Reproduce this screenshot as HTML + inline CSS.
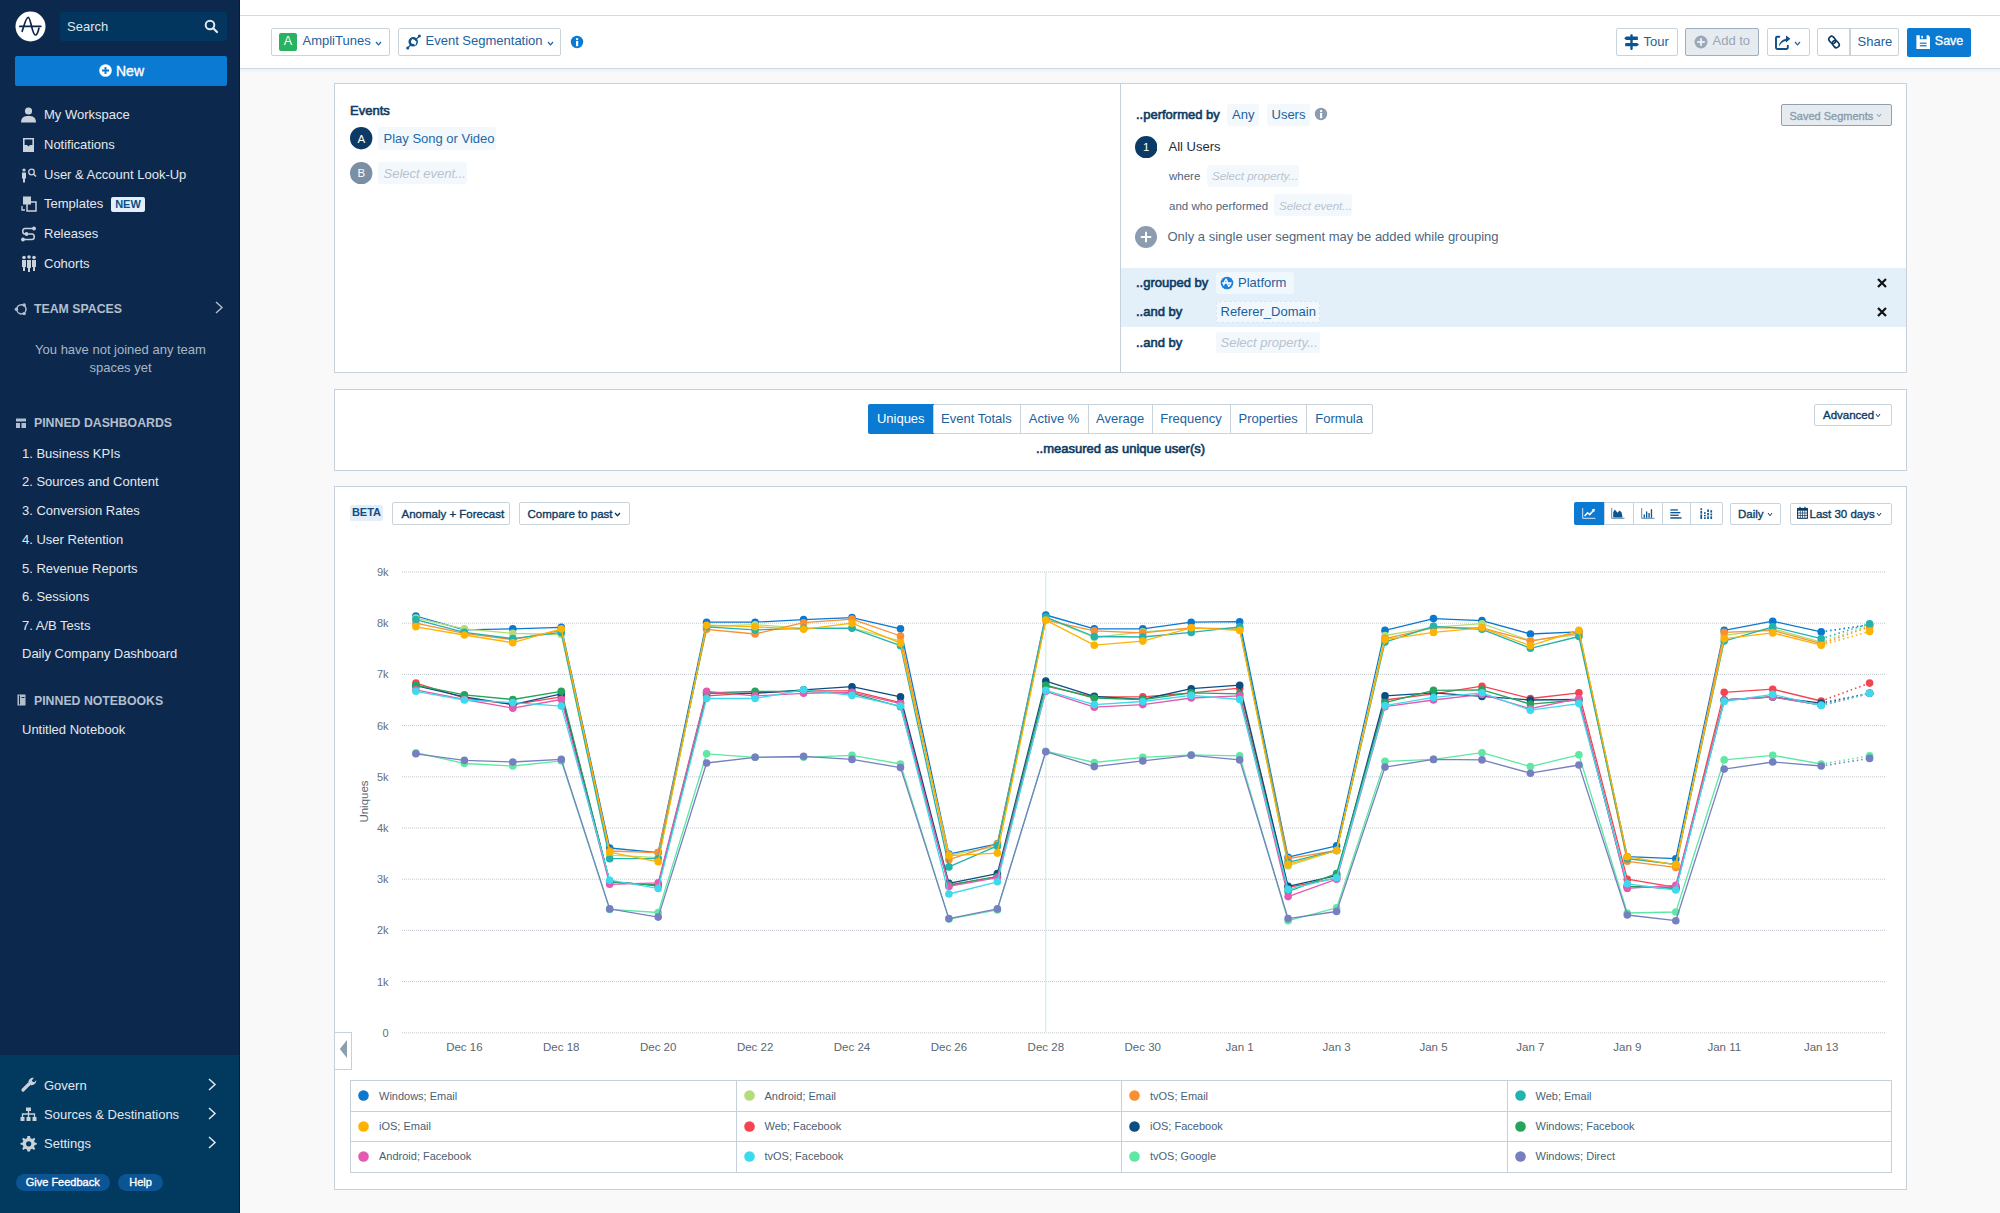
<!DOCTYPE html>
<html><head><meta charset="utf-8"><style>
html,body{margin:0;padding:0;}
body{width:2000px;height:1213px;position:relative;overflow:hidden;background:#f9f9f9;font-family:"Liberation Sans", sans-serif;}
.t{position:absolute;white-space:nowrap;}
.r{position:absolute;}
</style></head><body>
<div class="r" style="left:0px;top:0px;width:240px;height:1055px;background:#0c294d;"></div><div class="r" style="left:0px;top:1055px;width:240px;height:158px;background:#02395f;"></div><div class="r" style="left:239px;top:0px;width:1px;height:1213px;background:#081d38;"></div><svg class="r" style="left:15px;top:11px;" width="31" height="31" viewBox="0 0 31 31"><circle cx="15.5" cy="15.5" r="15" fill="#fff"/><path d="M4.8 15.4 H25.8 M7.2 20.3 C9.5 13 11 6.3 13.2 6.3 C15.8 6.3 17 24 20.4 24 C22.5 24 23.3 20 23.9 17.4" stroke="#0e2748" stroke-width="1.7" fill="none" stroke-linecap="round"/></svg><div class="r" style="left:60px;top:12px;width:167px;height:29px;background:#03365e;border-radius:3px;"></div><div class="t" style="left:67px;top:20.00px;font-size:13px;line-height:14.521px;color:#dfe5ec;font-weight:normal;">Search</div><svg class="r" style="left:204px;top:19px;" width="15" height="15" viewBox="0 0 15 15"><circle cx="6" cy="6" r="4.3" stroke="#e3e8ee" stroke-width="2" fill="none"/><path d="M9.2 9.2 L13 13" stroke="#e3e8ee" stroke-width="2.2" stroke-linecap="round"/></svg><div class="r" style="left:15px;top:56px;width:212px;height:30px;background:#0b7ad2;border-radius:2px;"></div><svg class="r" style="left:99px;top:64px;" width="13" height="13" viewBox="0 0 13 13"><circle cx="6.5" cy="6.5" r="6.3" fill="#fff"/><path d="M6.5 3 V10 M3 6.5 H10" stroke="#0b7ad2" stroke-width="2"/></svg><div class="t" style="left:116px;top:64.00px;font-size:14px;line-height:15.638px;color:#ffffff;font-weight:normal;-webkit-text-stroke:0.35px #ffffff;">New</div><div class="t" style="left:44px;top:108.00px;font-size:13px;line-height:14.521px;color:#e3e8ee;font-weight:normal;">My Workspace</div><div class="t" style="left:44px;top:138.00px;font-size:13px;line-height:14.521px;color:#e3e8ee;font-weight:normal;">Notifications</div><div class="t" style="left:44px;top:168.00px;font-size:13px;line-height:14.521px;color:#e3e8ee;font-weight:normal;">User &amp; Account Look-Up</div><div class="t" style="left:44px;top:197.00px;font-size:13px;line-height:14.521px;color:#e3e8ee;font-weight:normal;">Templates</div><div class="t" style="left:44px;top:227.00px;font-size:13px;line-height:14.521px;color:#e3e8ee;font-weight:normal;">Releases</div><div class="t" style="left:44px;top:257.00px;font-size:13px;line-height:14.521px;color:#e3e8ee;font-weight:normal;">Cohorts</div><svg class="r" style="left:20px;top:106px;" width="17" height="17" viewBox="0 0 17 17"><circle cx="8.5" cy="5" r="3.6" fill="#c9d1db"/><path d="M1 16.5 C1 11 4.5 10 8.5 10 C12.5 10 16 11 16 16.5 Z" fill="#c9d1db"/></svg><svg class="r" style="left:22px;top:137px;" width="13" height="16" viewBox="0 0 13 16"><path d="M1 1 H12 V15 H1 Z" fill="#c9d1db"/><path d="M2.6 2.6 H10.4 V8 H8 L6.5 9.6 L5 8 H2.6 Z" fill="#0c294d"/></svg><svg class="r" style="left:21px;top:167px;" width="17" height="16" viewBox="0 0 17 16"><circle cx="3" cy="3" r="1.6" fill="#c9d1db"/><rect x="1" y="5.5" width="4" height="6" fill="#c9d1db"/><rect x="2" y="11" width="2" height="4.5" fill="#c9d1db"/><circle cx="10.5" cy="5" r="2.8" stroke="#c9d1db" stroke-width="1.3" fill="none"/><path d="M12.5 7 L15 9.5" stroke="#c9d1db" stroke-width="1.4"/></svg><svg class="r" style="left:21px;top:196px;" width="16" height="16" viewBox="0 0 16 16"><rect x="2" y="0.5" width="8" height="8" fill="#c9d1db"/><rect x="6" y="6" width="9" height="9" stroke="#c9d1db" stroke-width="1.5" fill="none"/><path d="M1 10 V14 H4" stroke="#c9d1db" stroke-width="1.3" fill="none"/></svg><svg class="r" style="left:20px;top:226px;" width="17" height="16" viewBox="0 0 17 16"><path d="M14 2.5 H5 C2 2.5 2 8 5 8 H12 C15 8 15 13.5 12 13.5 H3" stroke="#c9d1db" stroke-width="1.5" fill="none"/><circle cx="14" cy="2.5" r="1.9" fill="#c9d1db"/><circle cx="6.5" cy="8" r="1.9" fill="#c9d1db"/><circle cx="3" cy="13.5" r="1.9" fill="#c9d1db"/></svg><svg class="r" style="left:21px;top:255px;" width="16" height="17" viewBox="0 0 16 17"><circle cx="3" cy="2.5" r="1.8" fill="#c9d1db"/><circle cx="8" cy="2" r="1.8" fill="#c9d1db"/><circle cx="13" cy="2.5" r="1.8" fill="#c9d1db"/><rect x="1" y="5" width="4" height="7" fill="#c9d1db"/><rect x="6" y="5" width="4" height="8" fill="#c9d1db"/><rect x="11" y="5" width="4" height="7" fill="#c9d1db"/><rect x="2" y="11" width="2" height="5" fill="#c9d1db"/><rect x="7" y="12" width="2" height="5" fill="#c9d1db"/><rect x="12" y="11" width="2" height="5" fill="#c9d1db"/></svg><div class="r" style="left:111px;top:197px;width:34px;height:15px;background:#e4eef8;border-radius:2px;"></div><div class="t" style="left:-372px;width:1000px;text-align:center;top:198.00px;font-size:11px;line-height:12.287px;color:#0d4f86;font-weight:bold;">NEW</div><div class="t" style="left:34px;top:303.00px;font-size:12.3px;line-height:13.739px;color:#b3bfcd;font-weight:bold;">TEAM SPACES</div><svg class="r" style="left:14px;top:302px;" width="14" height="15" viewBox="0 0 14 15"><circle cx="7.4" cy="7.3" r="4.6" stroke="#b3bfcd" stroke-width="1.5" fill="none"/><circle cx="2.4" cy="7.3" r="1.7" fill="#b3bfcd"/><circle cx="10.2" cy="3" r="1.7" fill="#b3bfcd"/><circle cx="10.2" cy="11.6" r="1.7" fill="#b3bfcd"/></svg><svg class="r" style="left:213px;top:300px;" width="12" height="15" viewBox="0 0 12 15"><path d="M3 2 L9 7.5 L3 13" stroke="#b3bfcd" stroke-width="1.4" fill="none"/></svg><div class="t" style="left:-379.5px;width:1000px;text-align:center;top:343.00px;font-size:13px;line-height:14.521px;color:#aab6c4;font-weight:normal;">You have not joined any team</div><div class="t" style="left:-379.5px;width:1000px;text-align:center;top:361.00px;font-size:13px;line-height:14.521px;color:#aab6c4;font-weight:normal;">spaces yet</div><div class="t" style="left:34px;top:417.00px;font-size:12.3px;line-height:13.739px;color:#b3bfcd;font-weight:bold;">PINNED DASHBOARDS</div><svg class="r" style="left:16px;top:418px;" width="11" height="11" viewBox="0 0 11 11"><rect x="0" y="0.5" width="10" height="3" fill="#b3bfcd"/><rect x="0" y="5" width="4" height="5" fill="#b3bfcd"/><rect x="5.5" y="5" width="4.5" height="5" fill="#b3bfcd"/></svg><div class="t" style="left:22px;top:447.00px;font-size:13px;line-height:14.521px;color:#e3e8ee;font-weight:normal;">1. Business KPIs</div><div class="t" style="left:22px;top:475.00px;font-size:13px;line-height:14.521px;color:#e3e8ee;font-weight:normal;">2. Sources and Content</div><div class="t" style="left:22px;top:504.00px;font-size:13px;line-height:14.521px;color:#e3e8ee;font-weight:normal;">3. Conversion Rates</div><div class="t" style="left:22px;top:533.00px;font-size:13px;line-height:14.521px;color:#e3e8ee;font-weight:normal;">4. User Retention</div><div class="t" style="left:22px;top:562.00px;font-size:13px;line-height:14.521px;color:#e3e8ee;font-weight:normal;">5. Revenue Reports</div><div class="t" style="left:22px;top:590.00px;font-size:13px;line-height:14.521px;color:#e3e8ee;font-weight:normal;">6. Sessions</div><div class="t" style="left:22px;top:619.00px;font-size:13px;line-height:14.521px;color:#e3e8ee;font-weight:normal;">7. A/B Tests</div><div class="t" style="left:22px;top:647.00px;font-size:13px;line-height:14.521px;color:#e3e8ee;font-weight:normal;">Daily Company Dashboard</div><div class="t" style="left:34px;top:695.00px;font-size:12.3px;line-height:13.739px;color:#b3bfcd;font-weight:bold;">PINNED NOTEBOOKS</div><svg class="r" style="left:17px;top:694px;" width="9" height="12" viewBox="0 0 9 12"><rect x="0.5" y="0.5" width="8" height="11" fill="#b3bfcd"/><rect x="2" y="1.5" width="1" height="9" fill="#0c294d"/><rect x="4.5" y="3" width="3" height="1" fill="#0c294d"/></svg><div class="t" style="left:22px;top:723.00px;font-size:13px;line-height:14.521px;color:#e3e8ee;font-weight:normal;">Untitled Notebook</div><div class="t" style="left:44px;top:1079.00px;font-size:13px;line-height:14.521px;color:#e3e8ee;font-weight:normal;">Govern</div><svg class="r" style="left:206px;top:1076.9px;" width="12" height="15" viewBox="0 0 12 15"><path d="M3 2 L9 7.5 L3 13" stroke="#e3e8ee" stroke-width="1.5" fill="none"/></svg><div class="t" style="left:44px;top:1108.00px;font-size:13px;line-height:14.521px;color:#e3e8ee;font-weight:normal;">Sources &amp; Destinations</div><svg class="r" style="left:206px;top:1105.7px;" width="12" height="15" viewBox="0 0 12 15"><path d="M3 2 L9 7.5 L3 13" stroke="#e3e8ee" stroke-width="1.5" fill="none"/></svg><div class="t" style="left:44px;top:1137.00px;font-size:13px;line-height:14.521px;color:#e3e8ee;font-weight:normal;">Settings</div><svg class="r" style="left:206px;top:1135.4px;" width="12" height="15" viewBox="0 0 12 15"><path d="M3 2 L9 7.5 L3 13" stroke="#e3e8ee" stroke-width="1.5" fill="none"/></svg><svg class="r" style="left:20px;top:1076px;" width="17" height="17" viewBox="0 0 17 17"><path d="M3 14 L9 8" stroke="#c9d1db" stroke-width="3.2" stroke-linecap="round"/><path d="M8.5 7 A4.5 4.5 0 0 1 14 1.8 L11.8 4.4 L12.6 5.8 L14.6 6.2 L16.2 4 A4.5 4.5 0 0 1 10.5 9 Z" fill="#c9d1db"/></svg><svg class="r" style="left:20px;top:1107px;" width="17" height="15" viewBox="0 0 17 15"><rect x="6" y="0.5" width="5" height="3.5" fill="#c9d1db"/><path d="M8.5 4 V7 M2.5 10 V7 H14.5 V10 M8.5 7 V10" stroke="#c9d1db" stroke-width="1.3" fill="none"/><rect x="0.5" y="10" width="4" height="4" fill="#c9d1db"/><rect x="6.5" y="10" width="4" height="4" fill="#c9d1db"/><rect x="12.5" y="10" width="4" height="4" fill="#c9d1db"/></svg><svg class="r" style="left:20px;top:1135px;" width="17" height="17" viewBox="0 0 17 17"><path d="M8.5 1 L10 1 L10.5 3.2 L12.3 4 L14.2 2.8 L15.3 4 L14 5.9 L14.8 7.6 L16.8 8 L16.8 9.6 L14.8 10 L14 11.8 L15.2 13.8 L14 14.9 L12.2 13.7 L10.4 14.5 L10 16.6 L7.4 16.6 L7 14.5 L5.2 13.7 L3.3 14.9 L2.2 13.8 L3.4 11.8 L2.6 10 L0.5 9.6 L0.5 8 L2.6 7.6 L3.4 5.9 L2.2 4 L3.3 2.8 L5.2 4 L7 3.2 L7.4 1 Z" fill="#c9d1db"/><circle cx="8.7" cy="8.8" r="2.6" fill="#02395f"/></svg><div class="r" style="left:16px;top:1174px;width:94px;height:17px;background:#0b5594;border-radius:9px;"></div><div class="t" style="left:-437.3px;width:1000px;text-align:center;top:1176.00px;font-size:11px;line-height:12.287px;color:#ffffff;font-weight:normal;-webkit-text-stroke:0.35px #ffffff;">Give Feedback</div><div class="r" style="left:118px;top:1174px;width:45px;height:17px;background:#0b5594;border-radius:9px;"></div><div class="t" style="left:-359.5px;width:1000px;text-align:center;top:1176.00px;font-size:11px;line-height:12.287px;color:#ffffff;font-weight:normal;-webkit-text-stroke:0.35px #ffffff;">Help</div><div class="r" style="left:240px;top:0px;width:1760px;height:15px;background:#fff;"></div><div class="r" style="left:240px;top:15px;width:1760px;height:1px;background:#d3dbe3;"></div><div class="r" style="left:240px;top:16px;width:1760px;height:52px;background:#fff;"></div><div class="r" style="left:240px;top:68px;width:1760px;height:1px;background:#cfd8e0;"></div><div class="r" style="left:240px;top:69px;width:1760px;height:4px;background:linear-gradient(#eef1f4,#f8f9fa);"></div><div class="r" style="left:271px;top:28px;width:119px;height:28px;background:#fff;border:1.5px solid #c9d3dc;border-radius:2px;box-sizing:border-box;"></div><div class="r" style="left:279px;top:33px;width:18px;height:18px;background:#27b35f;border-radius:2px;"></div><div class="t" style="left:-212px;width:1000px;text-align:center;top:35.00px;font-size:12.5px;line-height:13.963px;color:#fff;font-weight:normal;">A</div><div class="t" style="left:302.5px;top:34.00px;font-size:13px;line-height:14.521px;color:#1b619e;font-weight:normal;">AmpliTunes</div><svg class="r" style="left:375px;top:40.5px;" width="7" height="5" viewBox="0 0 7 5"><path d="M1 1 L3.5 3.8 L6 1" stroke="#1b619e" stroke-width="1.2" fill="none"/></svg><div class="r" style="left:398px;top:28px;width:163px;height:28px;background:#fff;border:1.5px solid #c9d3dc;border-radius:2px;box-sizing:border-box;"></div><svg class="r" style="left:405px;top:34px;" width="16" height="16" viewBox="0 0 16 16"><path d="M2.7 14 L14.4 2" stroke="#0c5390" stroke-width="1.1"/><circle cx="2.7" cy="14" r="1.5" fill="#0c5390"/><circle cx="14.4" cy="2" r="1.5" fill="#0c5390"/><circle cx="8.2" cy="7.8" r="3.5" stroke="#0c5390" stroke-width="2.5" fill="#fff"/><path d="M6.6 4.5 L11.6 7.7 L10.1 12 Z" fill="#fff"/></svg><div class="t" style="left:425.5px;top:34.00px;font-size:13px;line-height:14.521px;color:#1b619e;font-weight:normal;">Event Segmentation</div><svg class="r" style="left:547px;top:40.5px;" width="7" height="5" viewBox="0 0 7 5"><path d="M1 1 L3.5 3.8 L6 1" stroke="#1b619e" stroke-width="1.2" fill="none"/></svg><svg class="r" style="left:570px;top:35px;" width="14" height="14" viewBox="0 0 14 14"><circle cx="7" cy="7" r="6.2" fill="#0b7ad2"/><rect x="6" y="6" width="2.2" height="5.2" fill="#fff"/><circle cx="7.1" cy="4.1" r="1.2" fill="#fff"/></svg><div class="r" style="left:1616px;top:28px;width:62px;height:28px;background:#fff;border:1.5px solid #c9d3dc;border-radius:2px;box-sizing:border-box;"></div><svg class="r" style="left:1623px;top:33px;" width="17" height="18" viewBox="0 0 17 18"><rect x="7.3" y="1.3" width="2.4" height="15.6" rx="0.8" fill="#0d5591"/><path d="M1.2 5.2 L3.1 3.4 H14.3 Q14.9 3.4 14.9 4 V6.4 Q14.9 7 14.3 7 H3.1 Z" fill="#0d5591"/><path d="M2.8 9.9 H14.1 L16 11.6 L14.1 13.3 H2.8 Q2.2 13.3 2.2 12.7 V10.5 Q2.2 9.9 2.8 9.9 Z" fill="#0d5591"/></svg><div class="t" style="left:1643.5px;top:35.00px;font-size:13px;line-height:14.521px;color:#1b619e;font-weight:normal;">Tour</div><div class="r" style="left:1685px;top:28px;width:74px;height:28px;background:#e6ebf0;border:1.5px solid #9fafbf;border-radius:2px;box-sizing:border-box;"></div><svg class="r" style="left:1694px;top:35px;" width="14" height="14" viewBox="0 0 14 14"><circle cx="7" cy="7" r="6.5" fill="#9aa9b9"/><path d="M7 3.2 V10.8 M3.2 7 H10.8" stroke="#e6ebf0" stroke-width="2"/></svg><div class="t" style="left:1712.5px;top:34.00px;font-size:13px;line-height:14.521px;color:#98a6b6;font-weight:normal;">Add to</div><div class="r" style="left:1767px;top:28px;width:43px;height:28px;background:#fff;border:1.5px solid #c9d3dc;border-radius:2px;box-sizing:border-box;"></div><svg class="r" style="left:1774px;top:34px;" width="18" height="17" viewBox="0 0 18 17"><path d="M5.3 2.8 H3.2 Q2 2.8 2 4 V13.8 Q2 15 3.2 15 H12.6 Q13.8 15 13.8 13.8 V11.8" stroke="#0d4f86" stroke-width="1.9" fill="none" stroke-linecap="round"/><path d="M4.8 12.5 C5.3 8.5 8 5.6 12 4.8 V1.5 L16.4 4.8 L12 8.6 V6.9 C9 7.2 6.6 9.2 4.8 12.5 Z" fill="#0d4f86"/></svg><svg class="r" style="left:1793.5px;top:40.5px;" width="7" height="5" viewBox="0 0 7 5"><path d="M1 1 L3.5 3.8 L6 1" stroke="#1b619e" stroke-width="1.2" fill="none"/></svg><div class="r" style="left:1817px;top:28px;width:82px;height:28px;background:#fff;border:1.5px solid #c9d3dc;border-radius:2px;box-sizing:border-box;"></div><div class="r" style="left:1849px;top:29px;width:1.5px;height:26px;background:#c9d3dc;"></div><svg class="r" style="left:1824.5px;top:32.5px;" width="18" height="18" viewBox="0 0 18 18"><g transform="rotate(-40 9 9)" stroke="#0d3b63" stroke-width="1.6" fill="none"><rect x="6.2" y="2.5" width="5.6" height="7.6" rx="2.8"/><rect x="6.2" y="7.9" width="5.6" height="7.6" rx="2.8"/></g></svg><div class="t" style="left:1857.5px;top:35.00px;font-size:13px;line-height:14.521px;color:#1b619e;font-weight:normal;">Share</div><div class="r" style="left:1907px;top:27.5px;width:64px;height:29.0px;background:#0b7ad2;border-radius:2px;"></div><svg class="r" style="left:1916px;top:35px;" width="15" height="14" viewBox="0 0 15 14"><path d="M0.4 0.3 H12.4 L14 1.9 V13.9 H0.4 Z" fill="#fff"/><rect x="3.8" y="0" width="6.8" height="4.2" fill="#0b7ad2"/><rect x="5.3" y="0.9" width="1.6" height="2.4" fill="#fff"/><rect x="3.8" y="7.6" width="6.8" height="1.2" fill="#0b7ad2"/><rect x="3.8" y="10.1" width="6.8" height="1.3" fill="#0b7ad2"/></svg><div class="t" style="left:1934.8px;top:35.00px;font-size:12.5px;line-height:13.963px;color:#fff;font-weight:normal;-webkit-text-stroke:0.35px #fff;">Save</div><div class="r" style="left:334px;top:83px;width:1573px;height:290px;background:#fff;border:1.3px solid #c7d1db;box-sizing:border-box;"></div><div class="r" style="left:1120px;top:84px;width:1.2999999999999545px;height:288px;background:#c7d1db;"></div><div class="r" style="left:1121.3px;top:267.5px;width:784.4000000000001px;height:59.5px;background:#e3eff9;"></div><div class="t" style="left:350px;top:104.00px;font-size:13px;line-height:14.521px;color:#0d3b63;font-weight:normal;-webkit-text-stroke:0.6px #0d3b63;">Events</div><svg class="r" style="left:350.2px;top:127.2px;" width="22.4" height="22.4" viewBox="0 0 22.4 22.4"><circle cx="11.2" cy="11.2" r="11.2" fill="#0b3a66"/></svg><div class="t" style="left:-138.60000000000002px;width:1000px;text-align:center;top:133.00px;font-size:11.5px;line-height:12.845px;color:#fff;font-weight:normal;">A</div><div class="r" style="left:378px;top:127.4px;width:118px;height:22.19999999999999px;background:#f3f8fd;border-radius:3px;"></div><div class="t" style="left:383.5px;top:132.00px;font-size:13px;line-height:14.521px;color:#1a69ab;font-weight:normal;">Play Song or Video</div><svg class="r" style="left:350.2px;top:161.8px;" width="22.4" height="22.4" viewBox="0 0 22.4 22.4"><circle cx="11.2" cy="11.2" r="11.2" fill="#7b8ea3"/></svg><div class="t" style="left:-138.60000000000002px;width:1000px;text-align:center;top:167.00px;font-size:11.5px;line-height:12.845px;color:#fff;font-weight:normal;">B</div><div class="r" style="left:378px;top:162px;width:88.5px;height:22px;background:#f3f8fd;border-radius:3px;"></div><div class="t" style="left:383.5px;top:167.00px;font-size:13px;line-height:14.521px;color:#b8c3ce;font-weight:normal;font-style:italic;">Select event...</div><div class="t" style="left:1136px;top:108.00px;font-size:13px;line-height:14.521px;color:#0d3b63;font-weight:normal;-webkit-text-stroke:0.6px #0d3b63;">..performed by</div><div class="r" style="left:1227px;top:104px;width:32px;height:22px;background:#f3f8fd;border-radius:3px;"></div><div class="t" style="left:1232px;top:108.00px;font-size:13px;line-height:14.521px;color:#1b619e;font-weight:normal;">Any</div><div class="r" style="left:1267px;top:104px;width:43px;height:22px;background:#f3f8fd;border-radius:3px;"></div><div class="t" style="left:1271.5px;top:108.00px;font-size:13px;line-height:14.521px;color:#1b619e;font-weight:normal;">Users</div><svg class="r" style="left:1314px;top:107px;" width="14" height="14" viewBox="0 0 14 14"><circle cx="7" cy="7" r="6.2" fill="#8c9db0"/><rect x="6" y="6" width="2.2" height="5.2" fill="#fff"/><circle cx="7.1" cy="4.1" r="1.2" fill="#fff"/></svg><div class="r" style="left:1781px;top:104px;width:111px;height:22px;background:#e6ebf0;border:1.3px solid #8fa0b2;border-radius:2px;box-sizing:border-box;"></div><div class="t" style="left:1789.5px;top:110.00px;font-size:11px;line-height:12.287px;color:#8a9bae;font-weight:normal;-webkit-text-stroke:0.35px #8a9bae;">Saved Segments</div><svg class="r" style="left:1876px;top:112.5px;" width="6" height="5" viewBox="0 0 6 5"><path d="M1 1 L3.0 3.8 L5 1" stroke="#8a9bae" stroke-width="1" fill="none"/></svg><svg class="r" style="left:1135.1px;top:135.60000000000002px;" width="22.4" height="22.4" viewBox="0 0 22.4 22.4"><circle cx="11.2" cy="11.2" r="11.2" fill="#0b3a66"/></svg><div class="t" style="left:646.3px;width:1000px;text-align:center;top:141.00px;font-size:11.5px;line-height:12.845px;color:#fff;font-weight:normal;">1</div><div class="t" style="left:1168.5px;top:140.00px;font-size:13px;line-height:14.521px;color:#1d2b3a;font-weight:normal;">All Users</div><div class="t" style="left:1169px;top:170.00px;font-size:11.5px;line-height:12.845px;color:#4d6681;font-weight:normal;">where</div><div class="r" style="left:1207px;top:165px;width:92px;height:22px;background:#f3f8fd;border-radius:3px;"></div><div class="t" style="left:1212px;top:170.00px;font-size:11.5px;line-height:12.845px;color:#b8c3ce;font-weight:normal;font-style:italic;">Select property...</div><div class="t" style="left:1169px;top:200.00px;font-size:11.5px;line-height:12.845px;color:#4d6681;font-weight:normal;">and who performed</div><div class="r" style="left:1274px;top:194px;width:77.5px;height:22px;background:#f3f8fd;border-radius:3px;"></div><div class="t" style="left:1279px;top:200.00px;font-size:11.5px;line-height:12.845px;color:#b8c3ce;font-weight:normal;font-style:italic;">Select event...</div><svg class="r" style="left:1135px;top:226px;" width="22" height="22" viewBox="0 0 22 22"><circle cx="11" cy="11" r="11" fill="#8c9db0"/><path d="M11 5.8 V16.2 M5.8 11 H16.2" stroke="#fff" stroke-width="2"/></svg><div class="t" style="left:1167.5px;top:230.00px;font-size:13px;line-height:14.521px;color:#4f6882;font-weight:normal;">Only a single user segment may be added while grouping</div><div class="t" style="left:1136px;top:276.00px;font-size:13px;line-height:14.521px;color:#0d3b63;font-weight:normal;-webkit-text-stroke:0.6px #0d3b63;">..grouped by</div><div class="r" style="left:1216px;top:272px;width:78px;height:21.5px;background:#f0f7fd;border-radius:3px;"></div><svg class="r" style="left:1219.5px;top:275.5px;" width="14" height="14" viewBox="0 0 14 14"><circle cx="7" cy="7" r="6.3" fill="#1b7fdc"/><g transform="translate(7,7) scale(0.4) translate(-15.5,-15.5)"><path d="M4.8 15.4 H25.8 M7.2 20.3 C9.5 13 11 6.3 13.2 6.3 C15.8 6.3 17 24 20.4 24 C22.5 24 23.3 20 23.9 17.4" stroke="#fff" stroke-width="3.6" fill="none" stroke-linecap="round"/></g></svg><div class="t" style="left:1238px;top:276.00px;font-size:13px;line-height:14.521px;color:#1b619e;font-weight:normal;">Platform</div><svg class="r" style="left:1876px;top:277px;" width="12" height="12" viewBox="0 0 12 12"><path d="M2 2 L10 10 M10 2 L2 10" stroke="#111" stroke-width="2.2"/></svg><div class="t" style="left:1136px;top:305.00px;font-size:13px;line-height:14.521px;color:#0d3b63;font-weight:normal;-webkit-text-stroke:0.6px #0d3b63;">..and by</div><div class="r" style="left:1216px;top:301px;width:104px;height:21.5px;background:#f0f7fd;border-radius:3px;border:1px dashed #d8e6f2;box-sizing:border-box;"></div><div class="t" style="left:1220.5px;top:305.00px;font-size:13px;line-height:14.521px;color:#1b619e;font-weight:normal;">Referer_Domain</div><svg class="r" style="left:1876px;top:306px;" width="12" height="12" viewBox="0 0 12 12"><path d="M2 2 L10 10 M10 2 L2 10" stroke="#111" stroke-width="2.2"/></svg><div class="t" style="left:1136px;top:336.00px;font-size:13px;line-height:14.521px;color:#0d3b63;font-weight:normal;-webkit-text-stroke:0.6px #0d3b63;">..and by</div><div class="r" style="left:1216px;top:331.5px;width:104px;height:21.5px;background:#f3f8fd;border-radius:3px;"></div><div class="t" style="left:1220.5px;top:336.00px;font-size:13px;line-height:14.521px;color:#b8c3ce;font-weight:normal;font-style:italic;">Select property...</div><div class="r" style="left:334px;top:389px;width:1573px;height:82px;background:#fff;border:1.3px solid #c7d1db;box-sizing:border-box;"></div><div class="r" style="left:868px;top:404px;width:504.5px;height:30px;background:#fff;border:1.2px solid #c9d3dc;border-radius:2px;box-sizing:border-box;"></div><div class="r" style="left:868px;top:404px;width:65.60000000000002px;height:30px;background:#0b7ad2;border-radius:2px 0 0 2px;"></div><div class="t" style="left:400.75px;width:1000px;text-align:center;top:412.00px;font-size:13px;line-height:14.521px;color:#fff;font-weight:normal;">Uniques</div><div class="r" style="left:933px;top:405px;width:1.2000000000000455px;height:28px;background:#c9d3dc;"></div><div class="t" style="left:476.4px;width:1000px;text-align:center;top:412.00px;font-size:13px;line-height:14.521px;color:#1b619e;font-weight:normal;">Event Totals</div><div class="r" style="left:1019.8px;top:405px;width:1.2000000000000455px;height:28px;background:#c9d3dc;"></div><div class="t" style="left:554.05px;width:1000px;text-align:center;top:412.00px;font-size:13px;line-height:14.521px;color:#1b619e;font-weight:normal;">Active %</div><div class="r" style="left:1088.3px;top:405px;width:1.2000000000000455px;height:28px;background:#c9d3dc;"></div><div class="t" style="left:620.0999999999999px;width:1000px;text-align:center;top:412.00px;font-size:13px;line-height:14.521px;color:#1b619e;font-weight:normal;">Average</div><div class="r" style="left:1151.9px;top:405px;width:1.2000000000000455px;height:28px;background:#c9d3dc;"></div><div class="t" style="left:690.95px;width:1000px;text-align:center;top:412.00px;font-size:13px;line-height:14.521px;color:#1b619e;font-weight:normal;">Frequency</div><div class="r" style="left:1230px;top:405px;width:1.2000000000000455px;height:28px;background:#c9d3dc;"></div><div class="t" style="left:768.1500000000001px;width:1000px;text-align:center;top:412.00px;font-size:13px;line-height:14.521px;color:#1b619e;font-weight:normal;">Properties</div><div class="r" style="left:1306.3px;top:405px;width:1.2000000000000455px;height:28px;background:#c9d3dc;"></div><div class="t" style="left:839.1500000000001px;width:1000px;text-align:center;top:412.00px;font-size:13px;line-height:14.521px;color:#1b619e;font-weight:normal;">Formula</div><div class="t" style="left:620.5px;width:1000px;text-align:center;top:442.00px;font-size:13px;line-height:14.521px;color:#0d3b63;font-weight:normal;-webkit-text-stroke:0.6px #0d3b63;">..measured as unique user(s)</div><div class="r" style="left:1814px;top:404px;width:78px;height:22px;background:#fff;border:1.2px solid #c9d3dc;border-radius:2px;box-sizing:border-box;"></div><div class="t" style="left:1823px;top:409.00px;font-size:11.5px;line-height:12.845px;color:#0d3b63;font-weight:normal;-webkit-text-stroke:0.35px #0d3b63;">Advanced</div><svg class="r" style="left:1875px;top:413px;" width="6" height="5" viewBox="0 0 6 5"><path d="M1 1 L3.0 3.8 L5 1" stroke="#0d3b63" stroke-width="1" fill="none"/></svg><div class="r" style="left:334px;top:486px;width:1573px;height:704px;background:#fff;border:1.3px solid #c7d1db;box-sizing:border-box;"></div><div class="r" style="left:350px;top:505px;width:33px;height:16px;background:#e4eef8;border-radius:2px;"></div><div class="t" style="left:-133.5px;width:1000px;text-align:center;top:506.00px;font-size:11px;line-height:12.287px;color:#0d4f86;font-weight:bold;">BETA</div><div class="r" style="left:392px;top:502px;width:118px;height:22.5px;background:#fff;border:1.2px solid #c9d3dc;border-radius:2px;box-sizing:border-box;"></div><div class="t" style="left:401.5px;top:508.00px;font-size:11.5px;line-height:12.845px;color:#0d3b63;font-weight:normal;-webkit-text-stroke:0.35px #0d3b63;">Anomaly + Forecast</div><div class="r" style="left:518.5px;top:502px;width:111.0px;height:22.5px;background:#fff;border:1.2px solid #c9d3dc;border-radius:2px;box-sizing:border-box;"></div><div class="t" style="left:527.5px;top:508.00px;font-size:11.5px;line-height:12.845px;color:#0d3b63;font-weight:normal;-webkit-text-stroke:0.35px #0d3b63;">Compare to past</div><svg class="r" style="left:614px;top:512px;" width="7" height="5" viewBox="0 0 7 5"><path d="M1 1 L3.5 3.8 L6 1" stroke="#0d3b63" stroke-width="1.3" fill="none"/></svg><div class="r" style="left:1574px;top:502px;width:148.5px;height:22.5px;background:#fff;border:1.2px solid #c9d3dc;border-radius:2px;box-sizing:border-box;"></div><div class="r" style="left:1574px;top:502px;width:30px;height:22.5px;background:#0b7ad2;border-radius:2px 0 0 2px;"></div><div class="r" style="left:1604px;top:503px;width:1.2000000000000455px;height:20.5px;background:#c9d3dc;"></div><div class="r" style="left:1633px;top:503px;width:1.2000000000000455px;height:20.5px;background:#c9d3dc;"></div><div class="r" style="left:1662px;top:503px;width:1.2000000000000455px;height:20.5px;background:#c9d3dc;"></div><div class="r" style="left:1690px;top:503px;width:1.2000000000000455px;height:20.5px;background:#c9d3dc;"></div><svg class="r" style="left:1582px;top:508px;" width="15" height="11" viewBox="0 0 15 11"><path d="M0.7 0 V10.3 H13.5" stroke="#d6e6f5" stroke-width="1" fill="none"/><path d="M2.6 8 L5.6 4.8 L7.7 6.6 L11.5 2.4" stroke="#fff" stroke-width="1.5" fill="none"/><path d="M9.6 1.6 L13 0.8 L12.2 4.2 Z" fill="#fff"/></svg><svg class="r" style="left:1611px;top:508px;" width="15" height="11" viewBox="0 0 15 11"><path d="M0.7 0 V10.3 H13.5" stroke="#5d89b2" stroke-width="1" fill="none"/><path d="M2.2 9.6 V4.2 L3.8 1.6 L6.5 4.8 L8.6 2.6 L10.6 4.4 L11.6 9.6 Z" fill="#0d5591"/></svg><svg class="r" style="left:1641px;top:508px;" width="15" height="11" viewBox="0 0 15 11"><path d="M0.7 0 V10.3 H13.5" stroke="#5d89b2" stroke-width="1" fill="none"/><rect x="2.6" y="6.5" width="1.3" height="3.3" fill="#0d5591"/><rect x="5" y="3.5" width="1.3" height="6.3" fill="#0d5591"/><rect x="7.4" y="5" width="1.3" height="4.8" fill="#0d5591"/><rect x="9.8" y="1.2" width="1.3" height="8.6" fill="#0d5591"/></svg><svg class="r" style="left:1670px;top:508.5px;" width="13" height="10" viewBox="0 0 13 10"><rect x="0.3" y="0.3" width="7.6" height="1.3" fill="#0d5591"/><rect x="0.3" y="3" width="10" height="1.3" fill="#0d5591"/><rect x="0.3" y="5.6" width="8.4" height="1.3" fill="#0d5591"/><rect x="0.3" y="8.2" width="11.2" height="1.5" fill="#0d5591"/></svg><svg class="r" style="left:1699.5px;top:507.5px;" width="13" height="12" viewBox="0 0 13 12"><g fill="#0d5591"><rect x="0.4" y="0.3" width="1.7" height="1.8"/><rect x="0.4" y="3" width="1.7" height="2.6"/><rect x="0.4" y="6.4" width="1.7" height="4.6"/><rect x="4" y="4.2" width="1.7" height="1.6"/><rect x="4" y="6.8" width="1.7" height="1.6"/><rect x="4" y="9.3" width="1.7" height="1.7"/><rect x="7.2" y="1.5" width="1.7" height="2.6"/><rect x="7.2" y="5" width="1.7" height="2.4"/><rect x="7.2" y="8.3" width="1.7" height="2.7"/><rect x="10.4" y="2.2" width="1.7" height="2.4"/><rect x="10.4" y="5.6" width="1.7" height="1.8"/><rect x="10.4" y="8.3" width="1.7" height="2.7"/></g></svg><div class="r" style="left:1730px;top:502.5px;width:51px;height:22.0px;background:#fff;border:1.2px solid #c9d3dc;border-radius:2px;box-sizing:border-box;"></div><div class="t" style="left:1738px;top:508.00px;font-size:11.5px;line-height:12.845px;color:#0d3b63;font-weight:normal;-webkit-text-stroke:0.35px #0d3b63;">Daily</div><svg class="r" style="left:1767px;top:512px;" width="6" height="5" viewBox="0 0 6 5"><path d="M1 1 L3.0 3.8 L5 1" stroke="#0d3b63" stroke-width="1" fill="none"/></svg><div class="r" style="left:1789.5px;top:502.5px;width:102.5px;height:22.0px;background:#fff;border:1.2px solid #c9d3dc;border-radius:2px;box-sizing:border-box;"></div><svg class="r" style="left:1797px;top:506px;" width="11" height="13" viewBox="0 0 11 13"><rect x="0.6" y="2.5" width="9.8" height="9.8" stroke="#0d3b63" stroke-width="1.1" fill="none"/><rect x="0.6" y="2.5" width="9.8" height="2.2" fill="#0d3b63"/><path d="M0.6 7 H10.4 M0.6 9.5 H10.4 M3.3 4.5 V12.3 M5.5 4.5 V12.3 M7.8 4.5 V12.3" stroke="#0d3b63" stroke-width="0.7"/><rect x="2.4" y="0.8" width="1.2" height="2.6" fill="#0d3b63"/><rect x="7.4" y="0.8" width="1.2" height="2.6" fill="#0d3b63"/></svg><div class="t" style="left:1809.5px;top:508.00px;font-size:11.5px;line-height:12.845px;color:#0d3b63;font-weight:normal;-webkit-text-stroke:0.35px #0d3b63;">Last 30 days</div><svg class="r" style="left:1876px;top:512px;" width="6" height="5" viewBox="0 0 6 5"><path d="M1 1 L3.0 3.8 L5 1" stroke="#0d3b63" stroke-width="1" fill="none"/></svg><svg class="r" style="left:0;top:0" width="2000" height="1213" viewBox="0 0 2000 1213"><line x1="402" y1="1032.8" x2="1885" y2="1032.8" stroke="#c3c9cf" stroke-width="1" stroke-dasharray="1,1"/><line x1="402" y1="981.6" x2="1885" y2="981.6" stroke="#c3c9cf" stroke-width="1" stroke-dasharray="1,1"/><line x1="402" y1="930.4" x2="1885" y2="930.4" stroke="#c3c9cf" stroke-width="1" stroke-dasharray="1,1"/><line x1="402" y1="879.2" x2="1885" y2="879.2" stroke="#c3c9cf" stroke-width="1" stroke-dasharray="1,1"/><line x1="402" y1="828.0" x2="1885" y2="828.0" stroke="#c3c9cf" stroke-width="1" stroke-dasharray="1,1"/><line x1="402" y1="776.8" x2="1885" y2="776.8" stroke="#c3c9cf" stroke-width="1" stroke-dasharray="1,1"/><line x1="402" y1="725.6" x2="1885" y2="725.6" stroke="#c3c9cf" stroke-width="1" stroke-dasharray="1,1"/><line x1="402" y1="674.4" x2="1885" y2="674.4" stroke="#c3c9cf" stroke-width="1" stroke-dasharray="1,1"/><line x1="402" y1="623.2" x2="1885" y2="623.2" stroke="#c3c9cf" stroke-width="1" stroke-dasharray="1,1"/><line x1="402" y1="572.0" x2="1885" y2="572.0" stroke="#c3c9cf" stroke-width="1" stroke-dasharray="1,1"/><line x1="1045.8" y1="572" x2="1045.8" y2="1032" stroke="#d3eeea" stroke-width="1.2"/><polyline points="415.9,616.0 464.4,629.9 512.8,628.8 561.3,627.3 609.7,848.0 658.2,852.6 706.6,622.2 755.1,622.2 803.6,619.6 852.0,617.6 900.5,628.8 948.9,854.1 997.4,843.9 1045.8,615.0 1094.3,628.8 1142.8,628.8 1191.2,622.2 1239.7,621.7 1288.1,857.2 1336.6,845.9 1385.0,630.4 1433.5,618.6 1482.0,620.6 1530.4,634.0 1578.9,631.9 1627.3,856.7 1675.8,858.7 1724.2,630.4 1772.7,621.2 1821.2,631.9" stroke="#0b78d0" stroke-width="1.3" fill="none" stroke-linejoin="round"/><line x1="1821.2" y1="631.9" x2="1869.6" y2="624.7" stroke="#0b78d0" stroke-width="1.6" stroke-dasharray="1.5,3"/><circle cx="415.9" cy="616.0" r="3.8" fill="#0b78d0"/><circle cx="464.4" cy="629.9" r="3.8" fill="#0b78d0"/><circle cx="512.8" cy="628.8" r="3.8" fill="#0b78d0"/><circle cx="561.3" cy="627.3" r="3.8" fill="#0b78d0"/><circle cx="609.7" cy="848.0" r="3.8" fill="#0b78d0"/><circle cx="658.2" cy="852.6" r="3.8" fill="#0b78d0"/><circle cx="706.6" cy="622.2" r="3.8" fill="#0b78d0"/><circle cx="755.1" cy="622.2" r="3.8" fill="#0b78d0"/><circle cx="803.6" cy="619.6" r="3.8" fill="#0b78d0"/><circle cx="852.0" cy="617.6" r="3.8" fill="#0b78d0"/><circle cx="900.5" cy="628.8" r="3.8" fill="#0b78d0"/><circle cx="948.9" cy="854.1" r="3.8" fill="#0b78d0"/><circle cx="997.4" cy="843.9" r="3.8" fill="#0b78d0"/><circle cx="1045.8" cy="615.0" r="3.8" fill="#0b78d0"/><circle cx="1094.3" cy="628.8" r="3.8" fill="#0b78d0"/><circle cx="1142.8" cy="628.8" r="3.8" fill="#0b78d0"/><circle cx="1191.2" cy="622.2" r="3.8" fill="#0b78d0"/><circle cx="1239.7" cy="621.7" r="3.8" fill="#0b78d0"/><circle cx="1288.1" cy="857.2" r="3.8" fill="#0b78d0"/><circle cx="1336.6" cy="845.9" r="3.8" fill="#0b78d0"/><circle cx="1385.0" cy="630.4" r="3.8" fill="#0b78d0"/><circle cx="1433.5" cy="618.6" r="3.8" fill="#0b78d0"/><circle cx="1482.0" cy="620.6" r="3.8" fill="#0b78d0"/><circle cx="1530.4" cy="634.0" r="3.8" fill="#0b78d0"/><circle cx="1578.9" cy="631.9" r="3.8" fill="#0b78d0"/><circle cx="1627.3" cy="856.7" r="3.8" fill="#0b78d0"/><circle cx="1675.8" cy="858.7" r="3.8" fill="#0b78d0"/><circle cx="1724.2" cy="630.4" r="3.8" fill="#0b78d0"/><circle cx="1772.7" cy="621.2" r="3.8" fill="#0b78d0"/><circle cx="1821.2" cy="631.9" r="3.8" fill="#0b78d0"/><circle cx="1869.6" cy="624.7" r="3.8" fill="#0b78d0"/><polyline points="415.9,618.1 464.4,628.8 512.8,633.4 561.3,634.5 609.7,855.1 658.2,857.7 706.6,626.3 755.1,624.7 803.6,628.3 852.0,627.8 900.5,641.1 948.9,855.1 997.4,846.4 1045.8,617.6 1094.3,637.5 1142.8,631.9 1191.2,628.3 1239.7,628.3 1288.1,865.9 1336.6,850.5 1385.0,635.5 1433.5,627.3 1482.0,623.7 1530.4,640.6 1578.9,634.5 1627.3,858.7 1675.8,864.4 1724.2,635.5 1772.7,628.8 1821.2,642.1" stroke="#b3dd78" stroke-width="1.3" fill="none" stroke-linejoin="round"/><line x1="1821.2" y1="642.1" x2="1869.6" y2="625.2" stroke="#b3dd78" stroke-width="1.6" stroke-dasharray="1.5,3"/><circle cx="415.9" cy="618.1" r="3.8" fill="#b3dd78"/><circle cx="464.4" cy="628.8" r="3.8" fill="#b3dd78"/><circle cx="512.8" cy="633.4" r="3.8" fill="#b3dd78"/><circle cx="561.3" cy="634.5" r="3.8" fill="#b3dd78"/><circle cx="609.7" cy="855.1" r="3.8" fill="#b3dd78"/><circle cx="658.2" cy="857.7" r="3.8" fill="#b3dd78"/><circle cx="706.6" cy="626.3" r="3.8" fill="#b3dd78"/><circle cx="755.1" cy="624.7" r="3.8" fill="#b3dd78"/><circle cx="803.6" cy="628.3" r="3.8" fill="#b3dd78"/><circle cx="852.0" cy="627.8" r="3.8" fill="#b3dd78"/><circle cx="900.5" cy="641.1" r="3.8" fill="#b3dd78"/><circle cx="948.9" cy="855.1" r="3.8" fill="#b3dd78"/><circle cx="997.4" cy="846.4" r="3.8" fill="#b3dd78"/><circle cx="1045.8" cy="617.6" r="3.8" fill="#b3dd78"/><circle cx="1094.3" cy="637.5" r="3.8" fill="#b3dd78"/><circle cx="1142.8" cy="631.9" r="3.8" fill="#b3dd78"/><circle cx="1191.2" cy="628.3" r="3.8" fill="#b3dd78"/><circle cx="1239.7" cy="628.3" r="3.8" fill="#b3dd78"/><circle cx="1288.1" cy="865.9" r="3.8" fill="#b3dd78"/><circle cx="1336.6" cy="850.5" r="3.8" fill="#b3dd78"/><circle cx="1385.0" cy="635.5" r="3.8" fill="#b3dd78"/><circle cx="1433.5" cy="627.3" r="3.8" fill="#b3dd78"/><circle cx="1482.0" cy="623.7" r="3.8" fill="#b3dd78"/><circle cx="1530.4" cy="640.6" r="3.8" fill="#b3dd78"/><circle cx="1578.9" cy="634.5" r="3.8" fill="#b3dd78"/><circle cx="1627.3" cy="858.7" r="3.8" fill="#b3dd78"/><circle cx="1675.8" cy="864.4" r="3.8" fill="#b3dd78"/><circle cx="1724.2" cy="635.5" r="3.8" fill="#b3dd78"/><circle cx="1772.7" cy="628.8" r="3.8" fill="#b3dd78"/><circle cx="1821.2" cy="642.1" r="3.8" fill="#b3dd78"/><circle cx="1869.6" cy="625.2" r="3.8" fill="#b3dd78"/><polyline points="415.9,623.2 464.4,633.4 512.8,639.6 561.3,630.4 609.7,851.0 658.2,852.6 706.6,629.3 755.1,634.0 803.6,622.7 852.0,619.1 900.5,636.0 948.9,859.7 997.4,843.9 1045.8,620.1 1094.3,630.9 1142.8,632.9 1191.2,627.8 1239.7,629.3 1288.1,858.7 1336.6,850.5 1385.0,638.6 1433.5,627.8 1482.0,627.8 1530.4,641.1 1578.9,632.9 1627.3,861.3 1675.8,867.4 1724.2,632.4 1772.7,630.4 1821.2,643.7" stroke="#f98f32" stroke-width="1.3" fill="none" stroke-linejoin="round"/><line x1="1821.2" y1="643.7" x2="1869.6" y2="626.8" stroke="#f98f32" stroke-width="1.6" stroke-dasharray="1.5,3"/><circle cx="415.9" cy="623.2" r="3.8" fill="#f98f32"/><circle cx="464.4" cy="633.4" r="3.8" fill="#f98f32"/><circle cx="512.8" cy="639.6" r="3.8" fill="#f98f32"/><circle cx="561.3" cy="630.4" r="3.8" fill="#f98f32"/><circle cx="609.7" cy="851.0" r="3.8" fill="#f98f32"/><circle cx="658.2" cy="852.6" r="3.8" fill="#f98f32"/><circle cx="706.6" cy="629.3" r="3.8" fill="#f98f32"/><circle cx="755.1" cy="634.0" r="3.8" fill="#f98f32"/><circle cx="803.6" cy="622.7" r="3.8" fill="#f98f32"/><circle cx="852.0" cy="619.1" r="3.8" fill="#f98f32"/><circle cx="900.5" cy="636.0" r="3.8" fill="#f98f32"/><circle cx="948.9" cy="859.7" r="3.8" fill="#f98f32"/><circle cx="997.4" cy="843.9" r="3.8" fill="#f98f32"/><circle cx="1045.8" cy="620.1" r="3.8" fill="#f98f32"/><circle cx="1094.3" cy="630.9" r="3.8" fill="#f98f32"/><circle cx="1142.8" cy="632.9" r="3.8" fill="#f98f32"/><circle cx="1191.2" cy="627.8" r="3.8" fill="#f98f32"/><circle cx="1239.7" cy="629.3" r="3.8" fill="#f98f32"/><circle cx="1288.1" cy="858.7" r="3.8" fill="#f98f32"/><circle cx="1336.6" cy="850.5" r="3.8" fill="#f98f32"/><circle cx="1385.0" cy="638.6" r="3.8" fill="#f98f32"/><circle cx="1433.5" cy="627.8" r="3.8" fill="#f98f32"/><circle cx="1482.0" cy="627.8" r="3.8" fill="#f98f32"/><circle cx="1530.4" cy="641.1" r="3.8" fill="#f98f32"/><circle cx="1578.9" cy="632.9" r="3.8" fill="#f98f32"/><circle cx="1627.3" cy="861.3" r="3.8" fill="#f98f32"/><circle cx="1675.8" cy="867.4" r="3.8" fill="#f98f32"/><circle cx="1724.2" cy="632.4" r="3.8" fill="#f98f32"/><circle cx="1772.7" cy="630.4" r="3.8" fill="#f98f32"/><circle cx="1821.2" cy="643.7" r="3.8" fill="#f98f32"/><circle cx="1869.6" cy="626.8" r="3.8" fill="#f98f32"/><polyline points="415.9,619.6 464.4,632.4 512.8,638.6 561.3,632.4 609.7,858.7 658.2,858.7 706.6,626.8 755.1,629.9 803.6,628.3 852.0,628.3 900.5,645.7 948.9,866.9 997.4,845.9 1045.8,617.1 1094.3,636.5 1142.8,637.0 1191.2,632.4 1239.7,626.8 1288.1,862.3 1336.6,850.5 1385.0,642.1 1433.5,626.3 1482.0,629.3 1530.4,648.3 1578.9,636.5 1627.3,858.7 1675.8,864.4 1724.2,641.1 1772.7,626.8 1821.2,638.6" stroke="#22b3ad" stroke-width="1.3" fill="none" stroke-linejoin="round"/><line x1="1821.2" y1="638.6" x2="1869.6" y2="623.7" stroke="#22b3ad" stroke-width="1.6" stroke-dasharray="1.5,3"/><circle cx="415.9" cy="619.6" r="3.8" fill="#22b3ad"/><circle cx="464.4" cy="632.4" r="3.8" fill="#22b3ad"/><circle cx="512.8" cy="638.6" r="3.8" fill="#22b3ad"/><circle cx="561.3" cy="632.4" r="3.8" fill="#22b3ad"/><circle cx="609.7" cy="858.7" r="3.8" fill="#22b3ad"/><circle cx="658.2" cy="858.7" r="3.8" fill="#22b3ad"/><circle cx="706.6" cy="626.8" r="3.8" fill="#22b3ad"/><circle cx="755.1" cy="629.9" r="3.8" fill="#22b3ad"/><circle cx="803.6" cy="628.3" r="3.8" fill="#22b3ad"/><circle cx="852.0" cy="628.3" r="3.8" fill="#22b3ad"/><circle cx="900.5" cy="645.7" r="3.8" fill="#22b3ad"/><circle cx="948.9" cy="866.9" r="3.8" fill="#22b3ad"/><circle cx="997.4" cy="845.9" r="3.8" fill="#22b3ad"/><circle cx="1045.8" cy="617.1" r="3.8" fill="#22b3ad"/><circle cx="1094.3" cy="636.5" r="3.8" fill="#22b3ad"/><circle cx="1142.8" cy="637.0" r="3.8" fill="#22b3ad"/><circle cx="1191.2" cy="632.4" r="3.8" fill="#22b3ad"/><circle cx="1239.7" cy="626.8" r="3.8" fill="#22b3ad"/><circle cx="1288.1" cy="862.3" r="3.8" fill="#22b3ad"/><circle cx="1336.6" cy="850.5" r="3.8" fill="#22b3ad"/><circle cx="1385.0" cy="642.1" r="3.8" fill="#22b3ad"/><circle cx="1433.5" cy="626.3" r="3.8" fill="#22b3ad"/><circle cx="1482.0" cy="629.3" r="3.8" fill="#22b3ad"/><circle cx="1530.4" cy="648.3" r="3.8" fill="#22b3ad"/><circle cx="1578.9" cy="636.5" r="3.8" fill="#22b3ad"/><circle cx="1627.3" cy="858.7" r="3.8" fill="#22b3ad"/><circle cx="1675.8" cy="864.4" r="3.8" fill="#22b3ad"/><circle cx="1724.2" cy="641.1" r="3.8" fill="#22b3ad"/><circle cx="1772.7" cy="626.8" r="3.8" fill="#22b3ad"/><circle cx="1821.2" cy="638.6" r="3.8" fill="#22b3ad"/><circle cx="1869.6" cy="623.7" r="3.8" fill="#22b3ad"/><polyline points="415.9,626.8 464.4,635.0 512.8,642.7 561.3,628.8 609.7,852.1 658.2,861.8 706.6,625.2 755.1,626.8 803.6,629.3 852.0,623.2 900.5,643.2 948.9,855.6 997.4,853.1 1045.8,620.1 1094.3,645.2 1142.8,641.1 1191.2,627.8 1239.7,630.4 1288.1,864.4 1336.6,850.5 1385.0,639.6 1433.5,632.4 1482.0,627.8 1530.4,645.7 1578.9,630.4 1627.3,856.7 1675.8,864.9 1724.2,638.6 1772.7,632.9 1821.2,645.2" stroke="#fdb304" stroke-width="1.3" fill="none" stroke-linejoin="round"/><line x1="1821.2" y1="645.2" x2="1869.6" y2="631.4" stroke="#fdb304" stroke-width="1.6" stroke-dasharray="1.5,3"/><circle cx="415.9" cy="626.8" r="3.8" fill="#fdb304"/><circle cx="464.4" cy="635.0" r="3.8" fill="#fdb304"/><circle cx="512.8" cy="642.7" r="3.8" fill="#fdb304"/><circle cx="561.3" cy="628.8" r="3.8" fill="#fdb304"/><circle cx="609.7" cy="852.1" r="3.8" fill="#fdb304"/><circle cx="658.2" cy="861.8" r="3.8" fill="#fdb304"/><circle cx="706.6" cy="625.2" r="3.8" fill="#fdb304"/><circle cx="755.1" cy="626.8" r="3.8" fill="#fdb304"/><circle cx="803.6" cy="629.3" r="3.8" fill="#fdb304"/><circle cx="852.0" cy="623.2" r="3.8" fill="#fdb304"/><circle cx="900.5" cy="643.2" r="3.8" fill="#fdb304"/><circle cx="948.9" cy="855.6" r="3.8" fill="#fdb304"/><circle cx="997.4" cy="853.1" r="3.8" fill="#fdb304"/><circle cx="1045.8" cy="620.1" r="3.8" fill="#fdb304"/><circle cx="1094.3" cy="645.2" r="3.8" fill="#fdb304"/><circle cx="1142.8" cy="641.1" r="3.8" fill="#fdb304"/><circle cx="1191.2" cy="627.8" r="3.8" fill="#fdb304"/><circle cx="1239.7" cy="630.4" r="3.8" fill="#fdb304"/><circle cx="1288.1" cy="864.4" r="3.8" fill="#fdb304"/><circle cx="1336.6" cy="850.5" r="3.8" fill="#fdb304"/><circle cx="1385.0" cy="639.6" r="3.8" fill="#fdb304"/><circle cx="1433.5" cy="632.4" r="3.8" fill="#fdb304"/><circle cx="1482.0" cy="627.8" r="3.8" fill="#fdb304"/><circle cx="1530.4" cy="645.7" r="3.8" fill="#fdb304"/><circle cx="1578.9" cy="630.4" r="3.8" fill="#fdb304"/><circle cx="1627.3" cy="856.7" r="3.8" fill="#fdb304"/><circle cx="1675.8" cy="864.9" r="3.8" fill="#fdb304"/><circle cx="1724.2" cy="638.6" r="3.8" fill="#fdb304"/><circle cx="1772.7" cy="632.9" r="3.8" fill="#fdb304"/><circle cx="1821.2" cy="645.2" r="3.8" fill="#fdb304"/><circle cx="1869.6" cy="631.4" r="3.8" fill="#fdb304"/><polyline points="415.9,683.1 464.4,698.0 512.8,704.6 561.3,696.9 609.7,881.8 658.2,885.3 706.6,695.9 755.1,692.8 803.6,690.8 852.0,690.8 900.5,702.6 948.9,885.3 997.4,876.6 1045.8,686.2 1094.3,696.9 1142.8,696.9 1191.2,692.8 1239.7,688.2 1288.1,887.4 1336.6,878.2 1385.0,700.0 1433.5,693.9 1482.0,686.2 1530.4,698.5 1578.9,692.8 1627.3,879.2 1675.8,887.4 1724.2,692.3 1772.7,689.2 1821.2,701.0" stroke="#f5434f" stroke-width="1.3" fill="none" stroke-linejoin="round"/><line x1="1821.2" y1="701.0" x2="1869.6" y2="683.1" stroke="#f5434f" stroke-width="1.6" stroke-dasharray="1.5,3"/><circle cx="415.9" cy="683.1" r="3.8" fill="#f5434f"/><circle cx="464.4" cy="698.0" r="3.8" fill="#f5434f"/><circle cx="512.8" cy="704.6" r="3.8" fill="#f5434f"/><circle cx="561.3" cy="696.9" r="3.8" fill="#f5434f"/><circle cx="609.7" cy="881.8" r="3.8" fill="#f5434f"/><circle cx="658.2" cy="885.3" r="3.8" fill="#f5434f"/><circle cx="706.6" cy="695.9" r="3.8" fill="#f5434f"/><circle cx="755.1" cy="692.8" r="3.8" fill="#f5434f"/><circle cx="803.6" cy="690.8" r="3.8" fill="#f5434f"/><circle cx="852.0" cy="690.8" r="3.8" fill="#f5434f"/><circle cx="900.5" cy="702.6" r="3.8" fill="#f5434f"/><circle cx="948.9" cy="885.3" r="3.8" fill="#f5434f"/><circle cx="997.4" cy="876.6" r="3.8" fill="#f5434f"/><circle cx="1045.8" cy="686.2" r="3.8" fill="#f5434f"/><circle cx="1094.3" cy="696.9" r="3.8" fill="#f5434f"/><circle cx="1142.8" cy="696.9" r="3.8" fill="#f5434f"/><circle cx="1191.2" cy="692.8" r="3.8" fill="#f5434f"/><circle cx="1239.7" cy="688.2" r="3.8" fill="#f5434f"/><circle cx="1288.1" cy="887.4" r="3.8" fill="#f5434f"/><circle cx="1336.6" cy="878.2" r="3.8" fill="#f5434f"/><circle cx="1385.0" cy="700.0" r="3.8" fill="#f5434f"/><circle cx="1433.5" cy="693.9" r="3.8" fill="#f5434f"/><circle cx="1482.0" cy="686.2" r="3.8" fill="#f5434f"/><circle cx="1530.4" cy="698.5" r="3.8" fill="#f5434f"/><circle cx="1578.9" cy="692.8" r="3.8" fill="#f5434f"/><circle cx="1627.3" cy="879.2" r="3.8" fill="#f5434f"/><circle cx="1675.8" cy="887.4" r="3.8" fill="#f5434f"/><circle cx="1724.2" cy="692.3" r="3.8" fill="#f5434f"/><circle cx="1772.7" cy="689.2" r="3.8" fill="#f5434f"/><circle cx="1821.2" cy="701.0" r="3.8" fill="#f5434f"/><circle cx="1869.6" cy="683.1" r="3.8" fill="#f5434f"/><polyline points="415.9,685.7 464.4,696.9 512.8,704.6 561.3,693.9 609.7,881.8 658.2,885.3 706.6,692.8 755.1,693.3 803.6,689.8 852.0,686.7 900.5,696.9 948.9,883.3 997.4,873.6 1045.8,681.1 1094.3,696.4 1142.8,699.5 1191.2,688.7 1239.7,685.2 1288.1,886.4 1336.6,875.6 1385.0,695.9 1433.5,692.8 1482.0,696.4 1530.4,700.0 1578.9,699.5 1627.3,886.4 1675.8,888.4 1724.2,700.0 1772.7,696.9 1821.2,703.1" stroke="#0a4f83" stroke-width="1.3" fill="none" stroke-linejoin="round"/><line x1="1821.2" y1="703.1" x2="1869.6" y2="693.3" stroke="#0a4f83" stroke-width="1.6" stroke-dasharray="1.5,3"/><circle cx="415.9" cy="685.7" r="3.8" fill="#0a4f83"/><circle cx="464.4" cy="696.9" r="3.8" fill="#0a4f83"/><circle cx="512.8" cy="704.6" r="3.8" fill="#0a4f83"/><circle cx="561.3" cy="693.9" r="3.8" fill="#0a4f83"/><circle cx="609.7" cy="881.8" r="3.8" fill="#0a4f83"/><circle cx="658.2" cy="885.3" r="3.8" fill="#0a4f83"/><circle cx="706.6" cy="692.8" r="3.8" fill="#0a4f83"/><circle cx="755.1" cy="693.3" r="3.8" fill="#0a4f83"/><circle cx="803.6" cy="689.8" r="3.8" fill="#0a4f83"/><circle cx="852.0" cy="686.7" r="3.8" fill="#0a4f83"/><circle cx="900.5" cy="696.9" r="3.8" fill="#0a4f83"/><circle cx="948.9" cy="883.3" r="3.8" fill="#0a4f83"/><circle cx="997.4" cy="873.6" r="3.8" fill="#0a4f83"/><circle cx="1045.8" cy="681.1" r="3.8" fill="#0a4f83"/><circle cx="1094.3" cy="696.4" r="3.8" fill="#0a4f83"/><circle cx="1142.8" cy="699.5" r="3.8" fill="#0a4f83"/><circle cx="1191.2" cy="688.7" r="3.8" fill="#0a4f83"/><circle cx="1239.7" cy="685.2" r="3.8" fill="#0a4f83"/><circle cx="1288.1" cy="886.4" r="3.8" fill="#0a4f83"/><circle cx="1336.6" cy="875.6" r="3.8" fill="#0a4f83"/><circle cx="1385.0" cy="695.9" r="3.8" fill="#0a4f83"/><circle cx="1433.5" cy="692.8" r="3.8" fill="#0a4f83"/><circle cx="1482.0" cy="696.4" r="3.8" fill="#0a4f83"/><circle cx="1530.4" cy="700.0" r="3.8" fill="#0a4f83"/><circle cx="1578.9" cy="699.5" r="3.8" fill="#0a4f83"/><circle cx="1627.3" cy="886.4" r="3.8" fill="#0a4f83"/><circle cx="1675.8" cy="888.4" r="3.8" fill="#0a4f83"/><circle cx="1724.2" cy="700.0" r="3.8" fill="#0a4f83"/><circle cx="1772.7" cy="696.9" r="3.8" fill="#0a4f83"/><circle cx="1821.2" cy="703.1" r="3.8" fill="#0a4f83"/><circle cx="1869.6" cy="693.3" r="3.8" fill="#0a4f83"/><polyline points="415.9,685.2 464.4,694.9 512.8,699.5 561.3,691.3 609.7,881.8 658.2,885.3 706.6,692.8 755.1,691.3 803.6,691.3 852.0,693.3 900.5,706.7 948.9,884.8 997.4,876.6 1045.8,685.2 1094.3,698.0 1142.8,699.5 1191.2,692.8 1239.7,693.9 1288.1,891.5 1336.6,873.6 1385.0,702.6 1433.5,690.3 1482.0,689.8 1530.4,704.1 1578.9,700.0 1627.3,886.4 1675.8,888.4 1724.2,700.0 1772.7,696.9 1821.2,705.1" stroke="#25a45c" stroke-width="1.3" fill="none" stroke-linejoin="round"/><line x1="1821.2" y1="705.1" x2="1869.6" y2="693.3" stroke="#25a45c" stroke-width="1.6" stroke-dasharray="1.5,3"/><circle cx="415.9" cy="685.2" r="3.8" fill="#25a45c"/><circle cx="464.4" cy="694.9" r="3.8" fill="#25a45c"/><circle cx="512.8" cy="699.5" r="3.8" fill="#25a45c"/><circle cx="561.3" cy="691.3" r="3.8" fill="#25a45c"/><circle cx="609.7" cy="881.8" r="3.8" fill="#25a45c"/><circle cx="658.2" cy="885.3" r="3.8" fill="#25a45c"/><circle cx="706.6" cy="692.8" r="3.8" fill="#25a45c"/><circle cx="755.1" cy="691.3" r="3.8" fill="#25a45c"/><circle cx="803.6" cy="691.3" r="3.8" fill="#25a45c"/><circle cx="852.0" cy="693.3" r="3.8" fill="#25a45c"/><circle cx="900.5" cy="706.7" r="3.8" fill="#25a45c"/><circle cx="948.9" cy="884.8" r="3.8" fill="#25a45c"/><circle cx="997.4" cy="876.6" r="3.8" fill="#25a45c"/><circle cx="1045.8" cy="685.2" r="3.8" fill="#25a45c"/><circle cx="1094.3" cy="698.0" r="3.8" fill="#25a45c"/><circle cx="1142.8" cy="699.5" r="3.8" fill="#25a45c"/><circle cx="1191.2" cy="692.8" r="3.8" fill="#25a45c"/><circle cx="1239.7" cy="693.9" r="3.8" fill="#25a45c"/><circle cx="1288.1" cy="891.5" r="3.8" fill="#25a45c"/><circle cx="1336.6" cy="873.6" r="3.8" fill="#25a45c"/><circle cx="1385.0" cy="702.6" r="3.8" fill="#25a45c"/><circle cx="1433.5" cy="690.3" r="3.8" fill="#25a45c"/><circle cx="1482.0" cy="689.8" r="3.8" fill="#25a45c"/><circle cx="1530.4" cy="704.1" r="3.8" fill="#25a45c"/><circle cx="1578.9" cy="700.0" r="3.8" fill="#25a45c"/><circle cx="1627.3" cy="886.4" r="3.8" fill="#25a45c"/><circle cx="1675.8" cy="888.4" r="3.8" fill="#25a45c"/><circle cx="1724.2" cy="700.0" r="3.8" fill="#25a45c"/><circle cx="1772.7" cy="696.9" r="3.8" fill="#25a45c"/><circle cx="1821.2" cy="705.1" r="3.8" fill="#25a45c"/><circle cx="1869.6" cy="693.3" r="3.8" fill="#25a45c"/><polyline points="415.9,689.8 464.4,699.5 512.8,708.2 561.3,699.5 609.7,884.3 658.2,882.8 706.6,691.3 755.1,695.9 803.6,693.3 852.0,692.3 900.5,703.6 948.9,886.4 997.4,877.7 1045.8,691.3 1094.3,707.2 1142.8,704.6 1191.2,698.0 1239.7,695.9 1288.1,896.6 1336.6,879.2 1385.0,706.7 1433.5,700.0 1482.0,694.4 1530.4,708.7 1578.9,698.5 1627.3,888.4 1675.8,885.3 1724.2,700.0 1772.7,696.9 1821.2,705.1" stroke="#e35bb0" stroke-width="1.3" fill="none" stroke-linejoin="round"/><line x1="1821.2" y1="705.1" x2="1869.6" y2="693.3" stroke="#e35bb0" stroke-width="1.6" stroke-dasharray="1.5,3"/><circle cx="415.9" cy="689.8" r="3.8" fill="#e35bb0"/><circle cx="464.4" cy="699.5" r="3.8" fill="#e35bb0"/><circle cx="512.8" cy="708.2" r="3.8" fill="#e35bb0"/><circle cx="561.3" cy="699.5" r="3.8" fill="#e35bb0"/><circle cx="609.7" cy="884.3" r="3.8" fill="#e35bb0"/><circle cx="658.2" cy="882.8" r="3.8" fill="#e35bb0"/><circle cx="706.6" cy="691.3" r="3.8" fill="#e35bb0"/><circle cx="755.1" cy="695.9" r="3.8" fill="#e35bb0"/><circle cx="803.6" cy="693.3" r="3.8" fill="#e35bb0"/><circle cx="852.0" cy="692.3" r="3.8" fill="#e35bb0"/><circle cx="900.5" cy="703.6" r="3.8" fill="#e35bb0"/><circle cx="948.9" cy="886.4" r="3.8" fill="#e35bb0"/><circle cx="997.4" cy="877.7" r="3.8" fill="#e35bb0"/><circle cx="1045.8" cy="691.3" r="3.8" fill="#e35bb0"/><circle cx="1094.3" cy="707.2" r="3.8" fill="#e35bb0"/><circle cx="1142.8" cy="704.6" r="3.8" fill="#e35bb0"/><circle cx="1191.2" cy="698.0" r="3.8" fill="#e35bb0"/><circle cx="1239.7" cy="695.9" r="3.8" fill="#e35bb0"/><circle cx="1288.1" cy="896.6" r="3.8" fill="#e35bb0"/><circle cx="1336.6" cy="879.2" r="3.8" fill="#e35bb0"/><circle cx="1385.0" cy="706.7" r="3.8" fill="#e35bb0"/><circle cx="1433.5" cy="700.0" r="3.8" fill="#e35bb0"/><circle cx="1482.0" cy="694.4" r="3.8" fill="#e35bb0"/><circle cx="1530.4" cy="708.7" r="3.8" fill="#e35bb0"/><circle cx="1578.9" cy="698.5" r="3.8" fill="#e35bb0"/><circle cx="1627.3" cy="888.4" r="3.8" fill="#e35bb0"/><circle cx="1675.8" cy="885.3" r="3.8" fill="#e35bb0"/><circle cx="1724.2" cy="700.0" r="3.8" fill="#e35bb0"/><circle cx="1772.7" cy="696.9" r="3.8" fill="#e35bb0"/><circle cx="1821.2" cy="705.1" r="3.8" fill="#e35bb0"/><circle cx="1869.6" cy="693.3" r="3.8" fill="#e35bb0"/><polyline points="415.9,691.3 464.4,700.0 512.8,702.6 561.3,706.1 609.7,880.2 658.2,888.4 706.6,698.5 755.1,698.5 803.6,689.8 852.0,695.4 900.5,706.1 948.9,894.0 997.4,881.8 1045.8,690.3 1094.3,704.6 1142.8,701.5 1191.2,695.4 1239.7,699.5 1288.1,889.4 1336.6,877.7 1385.0,705.6 1433.5,697.4 1482.0,692.8 1530.4,710.2 1578.9,703.6 1627.3,883.8 1675.8,890.0 1724.2,701.5 1772.7,694.4 1821.2,705.6" stroke="#3fd9ee" stroke-width="1.3" fill="none" stroke-linejoin="round"/><line x1="1821.2" y1="705.6" x2="1869.6" y2="693.3" stroke="#3fd9ee" stroke-width="1.6" stroke-dasharray="1.5,3"/><circle cx="415.9" cy="691.3" r="3.8" fill="#3fd9ee"/><circle cx="464.4" cy="700.0" r="3.8" fill="#3fd9ee"/><circle cx="512.8" cy="702.6" r="3.8" fill="#3fd9ee"/><circle cx="561.3" cy="706.1" r="3.8" fill="#3fd9ee"/><circle cx="609.7" cy="880.2" r="3.8" fill="#3fd9ee"/><circle cx="658.2" cy="888.4" r="3.8" fill="#3fd9ee"/><circle cx="706.6" cy="698.5" r="3.8" fill="#3fd9ee"/><circle cx="755.1" cy="698.5" r="3.8" fill="#3fd9ee"/><circle cx="803.6" cy="689.8" r="3.8" fill="#3fd9ee"/><circle cx="852.0" cy="695.4" r="3.8" fill="#3fd9ee"/><circle cx="900.5" cy="706.1" r="3.8" fill="#3fd9ee"/><circle cx="948.9" cy="894.0" r="3.8" fill="#3fd9ee"/><circle cx="997.4" cy="881.8" r="3.8" fill="#3fd9ee"/><circle cx="1045.8" cy="690.3" r="3.8" fill="#3fd9ee"/><circle cx="1094.3" cy="704.6" r="3.8" fill="#3fd9ee"/><circle cx="1142.8" cy="701.5" r="3.8" fill="#3fd9ee"/><circle cx="1191.2" cy="695.4" r="3.8" fill="#3fd9ee"/><circle cx="1239.7" cy="699.5" r="3.8" fill="#3fd9ee"/><circle cx="1288.1" cy="889.4" r="3.8" fill="#3fd9ee"/><circle cx="1336.6" cy="877.7" r="3.8" fill="#3fd9ee"/><circle cx="1385.0" cy="705.6" r="3.8" fill="#3fd9ee"/><circle cx="1433.5" cy="697.4" r="3.8" fill="#3fd9ee"/><circle cx="1482.0" cy="692.8" r="3.8" fill="#3fd9ee"/><circle cx="1530.4" cy="710.2" r="3.8" fill="#3fd9ee"/><circle cx="1578.9" cy="703.6" r="3.8" fill="#3fd9ee"/><circle cx="1627.3" cy="883.8" r="3.8" fill="#3fd9ee"/><circle cx="1675.8" cy="890.0" r="3.8" fill="#3fd9ee"/><circle cx="1724.2" cy="701.5" r="3.8" fill="#3fd9ee"/><circle cx="1772.7" cy="694.4" r="3.8" fill="#3fd9ee"/><circle cx="1821.2" cy="705.6" r="3.8" fill="#3fd9ee"/><circle cx="1869.6" cy="693.3" r="3.8" fill="#3fd9ee"/><polyline points="415.9,752.7 464.4,763.5 512.8,766.0 561.3,760.9 609.7,909.4 658.2,912.5 706.6,753.8 755.1,757.3 803.6,757.3 852.0,755.3 900.5,764.0 948.9,919.1 997.4,909.9 1045.8,751.2 1094.3,762.5 1142.8,757.3 1191.2,754.8 1239.7,755.8 1288.1,920.7 1336.6,907.9 1385.0,761.4 1433.5,759.4 1482.0,752.7 1530.4,766.6 1578.9,754.8 1627.3,913.0 1675.8,912.0 1724.2,759.9 1772.7,755.3 1821.2,764.0" stroke="#5ee8a4" stroke-width="1.3" fill="none" stroke-linejoin="round"/><line x1="1821.2" y1="764.0" x2="1869.6" y2="755.8" stroke="#5ee8a4" stroke-width="1.6" stroke-dasharray="1.5,3"/><circle cx="415.9" cy="752.7" r="3.8" fill="#5ee8a4"/><circle cx="464.4" cy="763.5" r="3.8" fill="#5ee8a4"/><circle cx="512.8" cy="766.0" r="3.8" fill="#5ee8a4"/><circle cx="561.3" cy="760.9" r="3.8" fill="#5ee8a4"/><circle cx="609.7" cy="909.4" r="3.8" fill="#5ee8a4"/><circle cx="658.2" cy="912.5" r="3.8" fill="#5ee8a4"/><circle cx="706.6" cy="753.8" r="3.8" fill="#5ee8a4"/><circle cx="755.1" cy="757.3" r="3.8" fill="#5ee8a4"/><circle cx="803.6" cy="757.3" r="3.8" fill="#5ee8a4"/><circle cx="852.0" cy="755.3" r="3.8" fill="#5ee8a4"/><circle cx="900.5" cy="764.0" r="3.8" fill="#5ee8a4"/><circle cx="948.9" cy="919.1" r="3.8" fill="#5ee8a4"/><circle cx="997.4" cy="909.9" r="3.8" fill="#5ee8a4"/><circle cx="1045.8" cy="751.2" r="3.8" fill="#5ee8a4"/><circle cx="1094.3" cy="762.5" r="3.8" fill="#5ee8a4"/><circle cx="1142.8" cy="757.3" r="3.8" fill="#5ee8a4"/><circle cx="1191.2" cy="754.8" r="3.8" fill="#5ee8a4"/><circle cx="1239.7" cy="755.8" r="3.8" fill="#5ee8a4"/><circle cx="1288.1" cy="920.7" r="3.8" fill="#5ee8a4"/><circle cx="1336.6" cy="907.9" r="3.8" fill="#5ee8a4"/><circle cx="1385.0" cy="761.4" r="3.8" fill="#5ee8a4"/><circle cx="1433.5" cy="759.4" r="3.8" fill="#5ee8a4"/><circle cx="1482.0" cy="752.7" r="3.8" fill="#5ee8a4"/><circle cx="1530.4" cy="766.6" r="3.8" fill="#5ee8a4"/><circle cx="1578.9" cy="754.8" r="3.8" fill="#5ee8a4"/><circle cx="1627.3" cy="913.0" r="3.8" fill="#5ee8a4"/><circle cx="1675.8" cy="912.0" r="3.8" fill="#5ee8a4"/><circle cx="1724.2" cy="759.9" r="3.8" fill="#5ee8a4"/><circle cx="1772.7" cy="755.3" r="3.8" fill="#5ee8a4"/><circle cx="1821.2" cy="764.0" r="3.8" fill="#5ee8a4"/><circle cx="1869.6" cy="755.8" r="3.8" fill="#5ee8a4"/><polyline points="415.9,753.8 464.4,760.4 512.8,762.0 561.3,759.4 609.7,908.9 658.2,917.1 706.6,763.0 755.1,757.3 803.6,756.3 852.0,759.4 900.5,767.6 948.9,918.6 997.4,908.9 1045.8,751.7 1094.3,766.6 1142.8,760.9 1191.2,755.3 1239.7,759.9 1288.1,918.6 1336.6,911.5 1385.0,767.1 1433.5,759.4 1482.0,759.9 1530.4,773.2 1578.9,765.0 1627.3,915.0 1675.8,920.7 1724.2,769.1 1772.7,762.0 1821.2,766.0" stroke="#7680c0" stroke-width="1.3" fill="none" stroke-linejoin="round"/><line x1="1821.2" y1="766.0" x2="1869.6" y2="758.4" stroke="#7680c0" stroke-width="1.6" stroke-dasharray="1.5,3"/><circle cx="415.9" cy="753.8" r="3.8" fill="#7680c0"/><circle cx="464.4" cy="760.4" r="3.8" fill="#7680c0"/><circle cx="512.8" cy="762.0" r="3.8" fill="#7680c0"/><circle cx="561.3" cy="759.4" r="3.8" fill="#7680c0"/><circle cx="609.7" cy="908.9" r="3.8" fill="#7680c0"/><circle cx="658.2" cy="917.1" r="3.8" fill="#7680c0"/><circle cx="706.6" cy="763.0" r="3.8" fill="#7680c0"/><circle cx="755.1" cy="757.3" r="3.8" fill="#7680c0"/><circle cx="803.6" cy="756.3" r="3.8" fill="#7680c0"/><circle cx="852.0" cy="759.4" r="3.8" fill="#7680c0"/><circle cx="900.5" cy="767.6" r="3.8" fill="#7680c0"/><circle cx="948.9" cy="918.6" r="3.8" fill="#7680c0"/><circle cx="997.4" cy="908.9" r="3.8" fill="#7680c0"/><circle cx="1045.8" cy="751.7" r="3.8" fill="#7680c0"/><circle cx="1094.3" cy="766.6" r="3.8" fill="#7680c0"/><circle cx="1142.8" cy="760.9" r="3.8" fill="#7680c0"/><circle cx="1191.2" cy="755.3" r="3.8" fill="#7680c0"/><circle cx="1239.7" cy="759.9" r="3.8" fill="#7680c0"/><circle cx="1288.1" cy="918.6" r="3.8" fill="#7680c0"/><circle cx="1336.6" cy="911.5" r="3.8" fill="#7680c0"/><circle cx="1385.0" cy="767.1" r="3.8" fill="#7680c0"/><circle cx="1433.5" cy="759.4" r="3.8" fill="#7680c0"/><circle cx="1482.0" cy="759.9" r="3.8" fill="#7680c0"/><circle cx="1530.4" cy="773.2" r="3.8" fill="#7680c0"/><circle cx="1578.9" cy="765.0" r="3.8" fill="#7680c0"/><circle cx="1627.3" cy="915.0" r="3.8" fill="#7680c0"/><circle cx="1675.8" cy="920.7" r="3.8" fill="#7680c0"/><circle cx="1724.2" cy="769.1" r="3.8" fill="#7680c0"/><circle cx="1772.7" cy="762.0" r="3.8" fill="#7680c0"/><circle cx="1821.2" cy="766.0" r="3.8" fill="#7680c0"/><circle cx="1869.6" cy="758.4" r="3.8" fill="#7680c0"/></svg><div class="t" style="left:-611.5px;width:1000px;text-align:right;top:1027.00px;font-size:11px;line-height:12.287px;color:#666f78;font-weight:normal;">0</div><div class="t" style="left:-611.5px;width:1000px;text-align:right;top:976.00px;font-size:11px;line-height:12.287px;color:#666f78;font-weight:normal;">1k</div><div class="t" style="left:-611.5px;width:1000px;text-align:right;top:924.00px;font-size:11px;line-height:12.287px;color:#666f78;font-weight:normal;">2k</div><div class="t" style="left:-611.5px;width:1000px;text-align:right;top:873.00px;font-size:11px;line-height:12.287px;color:#666f78;font-weight:normal;">3k</div><div class="t" style="left:-611.5px;width:1000px;text-align:right;top:822.00px;font-size:11px;line-height:12.287px;color:#666f78;font-weight:normal;">4k</div><div class="t" style="left:-611.5px;width:1000px;text-align:right;top:771.00px;font-size:11px;line-height:12.287px;color:#666f78;font-weight:normal;">5k</div><div class="t" style="left:-611.5px;width:1000px;text-align:right;top:720.00px;font-size:11px;line-height:12.287px;color:#666f78;font-weight:normal;">6k</div><div class="t" style="left:-611.5px;width:1000px;text-align:right;top:668.00px;font-size:11px;line-height:12.287px;color:#666f78;font-weight:normal;">7k</div><div class="t" style="left:-611.5px;width:1000px;text-align:right;top:617.00px;font-size:11px;line-height:12.287px;color:#666f78;font-weight:normal;">8k</div><div class="t" style="left:-611.5px;width:1000px;text-align:right;top:566.00px;font-size:11px;line-height:12.287px;color:#666f78;font-weight:normal;">9k</div><div class="t" style="left:-35.64300000000003px;width:1000px;text-align:center;top:1041.00px;font-size:11.5px;line-height:12.845px;color:#5b6670;font-weight:normal;">Dec 16</div><div class="t" style="left:61.27099999999996px;width:1000px;text-align:center;top:1041.00px;font-size:11.5px;line-height:12.845px;color:#5b6670;font-weight:normal;">Dec 18</div><div class="t" style="left:158.18499999999995px;width:1000px;text-align:center;top:1041.00px;font-size:11.5px;line-height:12.845px;color:#5b6670;font-weight:normal;">Dec 20</div><div class="t" style="left:255.09899999999993px;width:1000px;text-align:center;top:1041.00px;font-size:11.5px;line-height:12.845px;color:#5b6670;font-weight:normal;">Dec 22</div><div class="t" style="left:352.0129999999999px;width:1000px;text-align:center;top:1041.00px;font-size:11.5px;line-height:12.845px;color:#5b6670;font-weight:normal;">Dec 24</div><div class="t" style="left:448.927px;width:1000px;text-align:center;top:1041.00px;font-size:11.5px;line-height:12.845px;color:#5b6670;font-weight:normal;">Dec 26</div><div class="t" style="left:545.8409999999999px;width:1000px;text-align:center;top:1041.00px;font-size:11.5px;line-height:12.845px;color:#5b6670;font-weight:normal;">Dec 28</div><div class="t" style="left:642.7550000000001px;width:1000px;text-align:center;top:1041.00px;font-size:11.5px;line-height:12.845px;color:#5b6670;font-weight:normal;">Dec 30</div><div class="t" style="left:739.6689999999999px;width:1000px;text-align:center;top:1041.00px;font-size:11.5px;line-height:12.845px;color:#5b6670;font-weight:normal;">Jan 1</div><div class="t" style="left:836.5830000000001px;width:1000px;text-align:center;top:1041.00px;font-size:11.5px;line-height:12.845px;color:#5b6670;font-weight:normal;">Jan 3</div><div class="t" style="left:933.4969999999998px;width:1000px;text-align:center;top:1041.00px;font-size:11.5px;line-height:12.845px;color:#5b6670;font-weight:normal;">Jan 5</div><div class="t" style="left:1030.411px;width:1000px;text-align:center;top:1041.00px;font-size:11.5px;line-height:12.845px;color:#5b6670;font-weight:normal;">Jan 7</div><div class="t" style="left:1127.3249999999998px;width:1000px;text-align:center;top:1041.00px;font-size:11.5px;line-height:12.845px;color:#5b6670;font-weight:normal;">Jan 9</div><div class="t" style="left:1224.239px;width:1000px;text-align:center;top:1041.00px;font-size:11.5px;line-height:12.845px;color:#5b6670;font-weight:normal;">Jan 11</div><div class="t" style="left:1321.1529999999998px;width:1000px;text-align:center;top:1041.00px;font-size:11.5px;line-height:12.845px;color:#5b6670;font-weight:normal;">Jan 13</div><div class="t" style="left:314px;top:795px;width:100px;text-align:center;font-size:11.5px;line-height:13px;color:#5b6670;transform:rotate(-90deg);">Uniques</div><div class="r" style="left:335.3px;top:1032px;width:17px;height:37.5px;background:#fff;border:1.3px solid #c7d1db;border-left:none;box-sizing:border-box;"></div><svg class="r" style="left:339px;top:1039px;" width="10" height="20" viewBox="0 0 10 20"><path d="M8 1 L0.8 10 L8 19 Z" fill="#8d9eb1"/></svg><div class="r" style="left:350px;top:1080px;width:1542px;height:93px;border:1.3px solid #c6d0da;box-sizing:border-box;"></div><div class="r" style="left:351px;top:1110.5px;width:1540px;height:1.2999999999999545px;background:#c6d0da;"></div><div class="r" style="left:351px;top:1141px;width:1540px;height:1.2999999999999545px;background:#c6d0da;"></div><div class="r" style="left:735.5px;top:1081px;width:1.2999999999999545px;height:91px;background:#c6d0da;"></div><div class="r" style="left:1121px;top:1081px;width:1.2999999999999545px;height:91px;background:#c6d0da;"></div><div class="r" style="left:1506.5px;top:1081px;width:1.2999999999999545px;height:91px;background:#c6d0da;"></div><svg class="r" style="left:358px;top:1090.0px;" width="11" height="11" viewBox="0 0 11 11"><circle cx="5.5" cy="5.5" r="5.3" fill="#0b78d0"/></svg><div class="t" style="left:379px;top:1090.00px;font-size:11px;line-height:12.287px;color:#4a5f75;font-weight:normal;">Windows; Email</div><svg class="r" style="left:743.5px;top:1090.0px;" width="11" height="11" viewBox="0 0 11 11"><circle cx="5.5" cy="5.5" r="5.3" fill="#b3dd78"/></svg><div class="t" style="left:764.5px;top:1090.00px;font-size:11px;line-height:12.287px;color:#4a5f75;font-weight:normal;">Android; Email</div><svg class="r" style="left:1129px;top:1090.0px;" width="11" height="11" viewBox="0 0 11 11"><circle cx="5.5" cy="5.5" r="5.3" fill="#f98f32"/></svg><div class="t" style="left:1150px;top:1090.00px;font-size:11px;line-height:12.287px;color:#4a5f75;font-weight:normal;">tvOS; Email</div><svg class="r" style="left:1514.5px;top:1090.0px;" width="11" height="11" viewBox="0 0 11 11"><circle cx="5.5" cy="5.5" r="5.3" fill="#22b3ad"/></svg><div class="t" style="left:1535.5px;top:1090.00px;font-size:11px;line-height:12.287px;color:#4a5f75;font-weight:normal;">Web; Email</div><svg class="r" style="left:358px;top:1120.5px;" width="11" height="11" viewBox="0 0 11 11"><circle cx="5.5" cy="5.5" r="5.3" fill="#fdb304"/></svg><div class="t" style="left:379px;top:1120.00px;font-size:11px;line-height:12.287px;color:#4a5f75;font-weight:normal;">iOS; Email</div><svg class="r" style="left:743.5px;top:1120.5px;" width="11" height="11" viewBox="0 0 11 11"><circle cx="5.5" cy="5.5" r="5.3" fill="#f5434f"/></svg><div class="t" style="left:764.5px;top:1120.00px;font-size:11px;line-height:12.287px;color:#4a5f75;font-weight:normal;">Web; Facebook</div><svg class="r" style="left:1129px;top:1120.5px;" width="11" height="11" viewBox="0 0 11 11"><circle cx="5.5" cy="5.5" r="5.3" fill="#0a4f83"/></svg><div class="t" style="left:1150px;top:1120.00px;font-size:11px;line-height:12.287px;color:#4a5f75;font-weight:normal;">iOS; Facebook</div><svg class="r" style="left:1514.5px;top:1120.5px;" width="11" height="11" viewBox="0 0 11 11"><circle cx="5.5" cy="5.5" r="5.3" fill="#25a45c"/></svg><div class="t" style="left:1535.5px;top:1120.00px;font-size:11px;line-height:12.287px;color:#4a5f75;font-weight:normal;">Windows; Facebook</div><svg class="r" style="left:358px;top:1151.0px;" width="11" height="11" viewBox="0 0 11 11"><circle cx="5.5" cy="5.5" r="5.3" fill="#e35bb0"/></svg><div class="t" style="left:379px;top:1150.00px;font-size:11px;line-height:12.287px;color:#4a5f75;font-weight:normal;">Android; Facebook</div><svg class="r" style="left:743.5px;top:1151.0px;" width="11" height="11" viewBox="0 0 11 11"><circle cx="5.5" cy="5.5" r="5.3" fill="#3fd9ee"/></svg><div class="t" style="left:764.5px;top:1150.00px;font-size:11px;line-height:12.287px;color:#4a5f75;font-weight:normal;">tvOS; Facebook</div><svg class="r" style="left:1129px;top:1151.0px;" width="11" height="11" viewBox="0 0 11 11"><circle cx="5.5" cy="5.5" r="5.3" fill="#5ee8a4"/></svg><div class="t" style="left:1150px;top:1150.00px;font-size:11px;line-height:12.287px;color:#4a5f75;font-weight:normal;">tvOS; Google</div><svg class="r" style="left:1514.5px;top:1151.0px;" width="11" height="11" viewBox="0 0 11 11"><circle cx="5.5" cy="5.5" r="5.3" fill="#7680c0"/></svg><div class="t" style="left:1535.5px;top:1150.00px;font-size:11px;line-height:12.287px;color:#4a5f75;font-weight:normal;">Windows; Direct</div>
</body></html>
